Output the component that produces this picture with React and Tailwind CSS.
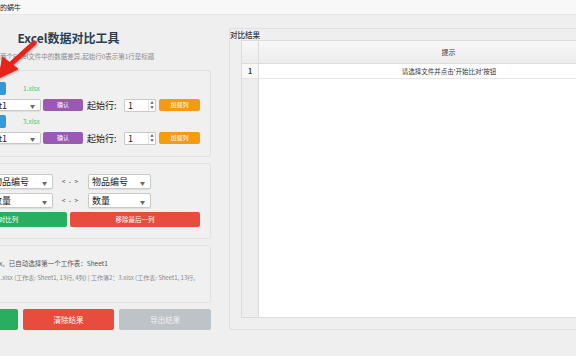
import React from "react";

function Combo({ w, text, ml = "" }) {
  return (
    <div className={`relative flex h-full items-center rounded-[2px] border border-[#c9c9c9] bg-white shadow-[0_1px_1px_rgba(0,0,0,0.08)] ${w} ${ml}`}>
      <span className="pl-[3px] text-[9px] leading-none text-[#222]">{text}</span>
      <span className="absolute right-[5px] top-1/2 -translate-y-1/2 text-[5px] leading-none text-[#666]">▼</span>
    </div>
  );
}

function Spin() {
  return (
    <div className="flex h-[13px] w-[32px] items-stretch rounded-[1px] border border-[#c9c9c9] bg-white">
      <span className="flex-1 pl-[3px] text-[9px] leading-[11px] text-[#222]">1</span>
      <div className="flex w-[7px] flex-col items-center justify-center gap-[1px] border-l border-[#e2e2e2]">
        <span className="text-[3.5px] leading-none text-[#666]">▲</span>
        <span className="text-[3.5px] leading-none text-[#666]">▼</span>
      </div>
    </div>
  );
}

function SmallBtn({ color, w, label }) {
  return (
    <div className={`flex h-full items-center justify-center rounded-[2px] text-[6px] leading-none text-white ${color} ${w}`}>
      {label}
    </div>
  );
}

function FileRows({ n, file }) {
  return (
    <>
      <div className="flex h-[13px] items-center">
        <div className="h-full w-[69px] rounded-[2px] bg-[#3498db]" />
        <span className="ml-[17px] text-[6.5px] leading-none text-[#2ecc71]">{file}</span>
      </div>
      <div className="mt-[4px] flex h-[12px] items-center">
        <span className="w-[37px] text-[7px] text-[#333]">工作表{n}:</span>
        <Combo w="w-[67px]" text="Sheet1" />
        <div className="ml-[2px] h-full">
          <SmallBtn color="bg-[#9b59b6]" w="w-[40px]" label="确认" />
        </div>
        <span className="ml-[4px] w-[37px] text-[9px] leading-none text-[#222]">起始行:</span>
        <Spin />
        <div className="ml-[3px] h-full">
          <SmallBtn color="bg-[#f39c12]" w="w-[41px]" label="加载列" />
        </div>
      </div>
    </>
  );
}

function Arrow() {
  return (
    <span className="w-[35px] text-center text-[6.5px] font-medium leading-none tracking-[1px] text-[#555]">&lt; - &gt;</span>
  );
}

export default function App() {
  return (
    <div className="relative h-[356px] w-[576px] overflow-hidden bg-[#efefef] font-['Noto_Sans_CJK_SC',sans-serif] text-[#333]">
      {/* top bar */}
      <div className="h-[15px] border-b border-[#e6e6e6] bg-[#f8f8f8] text-[7px] leading-[15px] text-[#222]">
        的蜗牛
      </div>

      <div className="flex">
        {/* left panel */}
        <div className="-ml-[74px] w-[285px] shrink-0">
          <div className="mt-[15px] h-[16px] text-center text-[12px] font-bold leading-[16px] text-[#2c3e50]">
            Excel数据对比工具
          </div>
          <div className="mt-[6px] h-[9px] whitespace-nowrap pl-[61px] text-[6.5px] leading-[9px] text-[#8a8a8a]">
            对比两个Excel文件中的数据差异,起始行0表示第1行是标题
          </div>

          {/* file box */}
          <div className="mt-[9px] h-[87px] rounded-[3px] border border-[#e2e2e2] bg-[#f0f0f0] px-[10px] pt-[11px]">
            <FileRows n={1} file="1.xlsx" />
            <div className="mt-[4px]" />
            <FileRows n={2} file="3.xlsx" />
          </div>

          {/* column box */}
          <div className="mt-[6px] h-[76px] rounded-[3px] border border-[#e2e2e2] bg-[#f0f0f0] px-[10px] pt-[10px]">
            <div className="flex h-[15px] items-center">
              <span className="w-[52px] text-[7px]">对比列1:</span>
              <Combo w="w-[64px]" text="物品编号" />
              <Arrow />
              <Combo w="w-[63px]" text="物品编号" />
            </div>
            <div className="mt-[4px] flex h-[15px] items-center">
              <span className="w-[52px] text-[7px]">对比列2:</span>
              <Combo w="w-[64px]" text="数量" />
              <Arrow />
              <Combo w="w-[63px]" text="数量" />
            </div>
            <div className="mt-[4px] flex h-[15px] gap-[3px]">
              <div className="flex flex-1 items-center justify-center rounded-[2px] bg-[#27ae60] text-[6.5px] leading-none text-white">
                添加对比列
              </div>
              <div className="flex flex-1 items-center justify-center rounded-[2px] bg-[#e74c3c] text-[6.5px] leading-none text-white">
                移除最后一列
              </div>
            </div>
          </div>

          {/* log box */}
          <div className="mt-[6px] h-[58px] overflow-hidden rounded-[3px] border border-[#e2e2e2] bg-[#f0f0f0] px-[10px] pt-[12px]">
            <div className="whitespace-nowrap pl-[3px] text-[6.5px] leading-[10px] text-[#555]">
              已加载工作簿：3.xlsx。已自动选择第一个工作表：Sheet1
            </div>
            <div className="mt-[5px] whitespace-nowrap pl-[33px] text-[6px] leading-[10px] text-[#888]">
              工作簿1：1.xlsx (工作表: Sheet1, 13行, 4列) | 工作簿2：3.xlsx (工作表: Sheet1, 13行,
            </div>
          </div>

          {/* bottom buttons */}
          <div className="mt-[6px] grid h-[21px] grid-cols-3 gap-[5px]">
            <div className="flex items-center justify-center rounded-[2px] bg-[#27ae60] text-[7.5px] leading-none text-white">
              开始比对
            </div>
            <div className="flex items-center justify-center rounded-[2px] bg-[#e74c3c] text-[7.5px] leading-none text-white">
              清除结果
            </div>
            <div className="flex items-center justify-center rounded-[2px] bg-[#bdc3c7] text-[7.5px] leading-none text-[#eef0f1]">
              导出结果
            </div>
          </div>
        </div>

        {/* right panel */}
        <div className="ml-[18px] w-[440px] shrink-0">
          <div className="mt-[13px] h-[302px] rounded-[2px] border border-[#e0e0e0] bg-[#efefef]">
            <div className="h-[11px] text-[7.5px] font-medium leading-[11px] text-[#333]">对比结果</div>
            <div className="ml-[11px] flex h-[278px] border-b border-l border-t border-[#dcdcdc]">
              <div className="flex w-[17px] flex-col border-r border-[#dcdcdc] bg-[#eeeeee]">
                <div className="h-[23px] border-b border-[#dcdcdc] bg-gradient-to-b from-[#f8f8f8] to-[#ececec]" />
                <div className="flex h-[15px] items-center justify-center border-b border-[#e2e2e2] bg-[#f8f8f8] text-[7px] font-bold leading-none text-[#333]">
                  1
                </div>
              </div>
              <div className="flex flex-1 flex-col bg-white">
                <div className="flex h-[23px] w-[380px] items-center justify-center border-b border-r border-[#dcdcdc] bg-gradient-to-b from-[#f8f8f8] to-[#ececec] text-[7px] leading-none text-[#333]">
                  提示
                </div>
                <div className="flex h-[15px] w-[380px] items-center justify-center border-b border-[#e6e6e6] text-[6.5px] leading-none text-[#333]">
                  请选择文件并点击'开始比对'按钮
                </div>
              </div>
            </div>
          </div>
        </div>
      </div>

      {/* red arrow overlay */}
      <svg className="pointer-events-none absolute left-0 top-0" width="60" height="100" viewBox="0 0 60 100">
        <g fill="#e8231c" stroke="#e8231c" style={{ filter: "drop-shadow(1px 1px 1px rgba(0,0,0,0.3))" }}>
          <line x1="34" y1="43" x2="12" y2="63" strokeWidth="5" strokeLinecap="round" />
          <polygon points="-1,78 2.5,57 18,69" strokeWidth="1" strokeLinejoin="round" />
        </g>
      </svg>
    </div>
  );
}
